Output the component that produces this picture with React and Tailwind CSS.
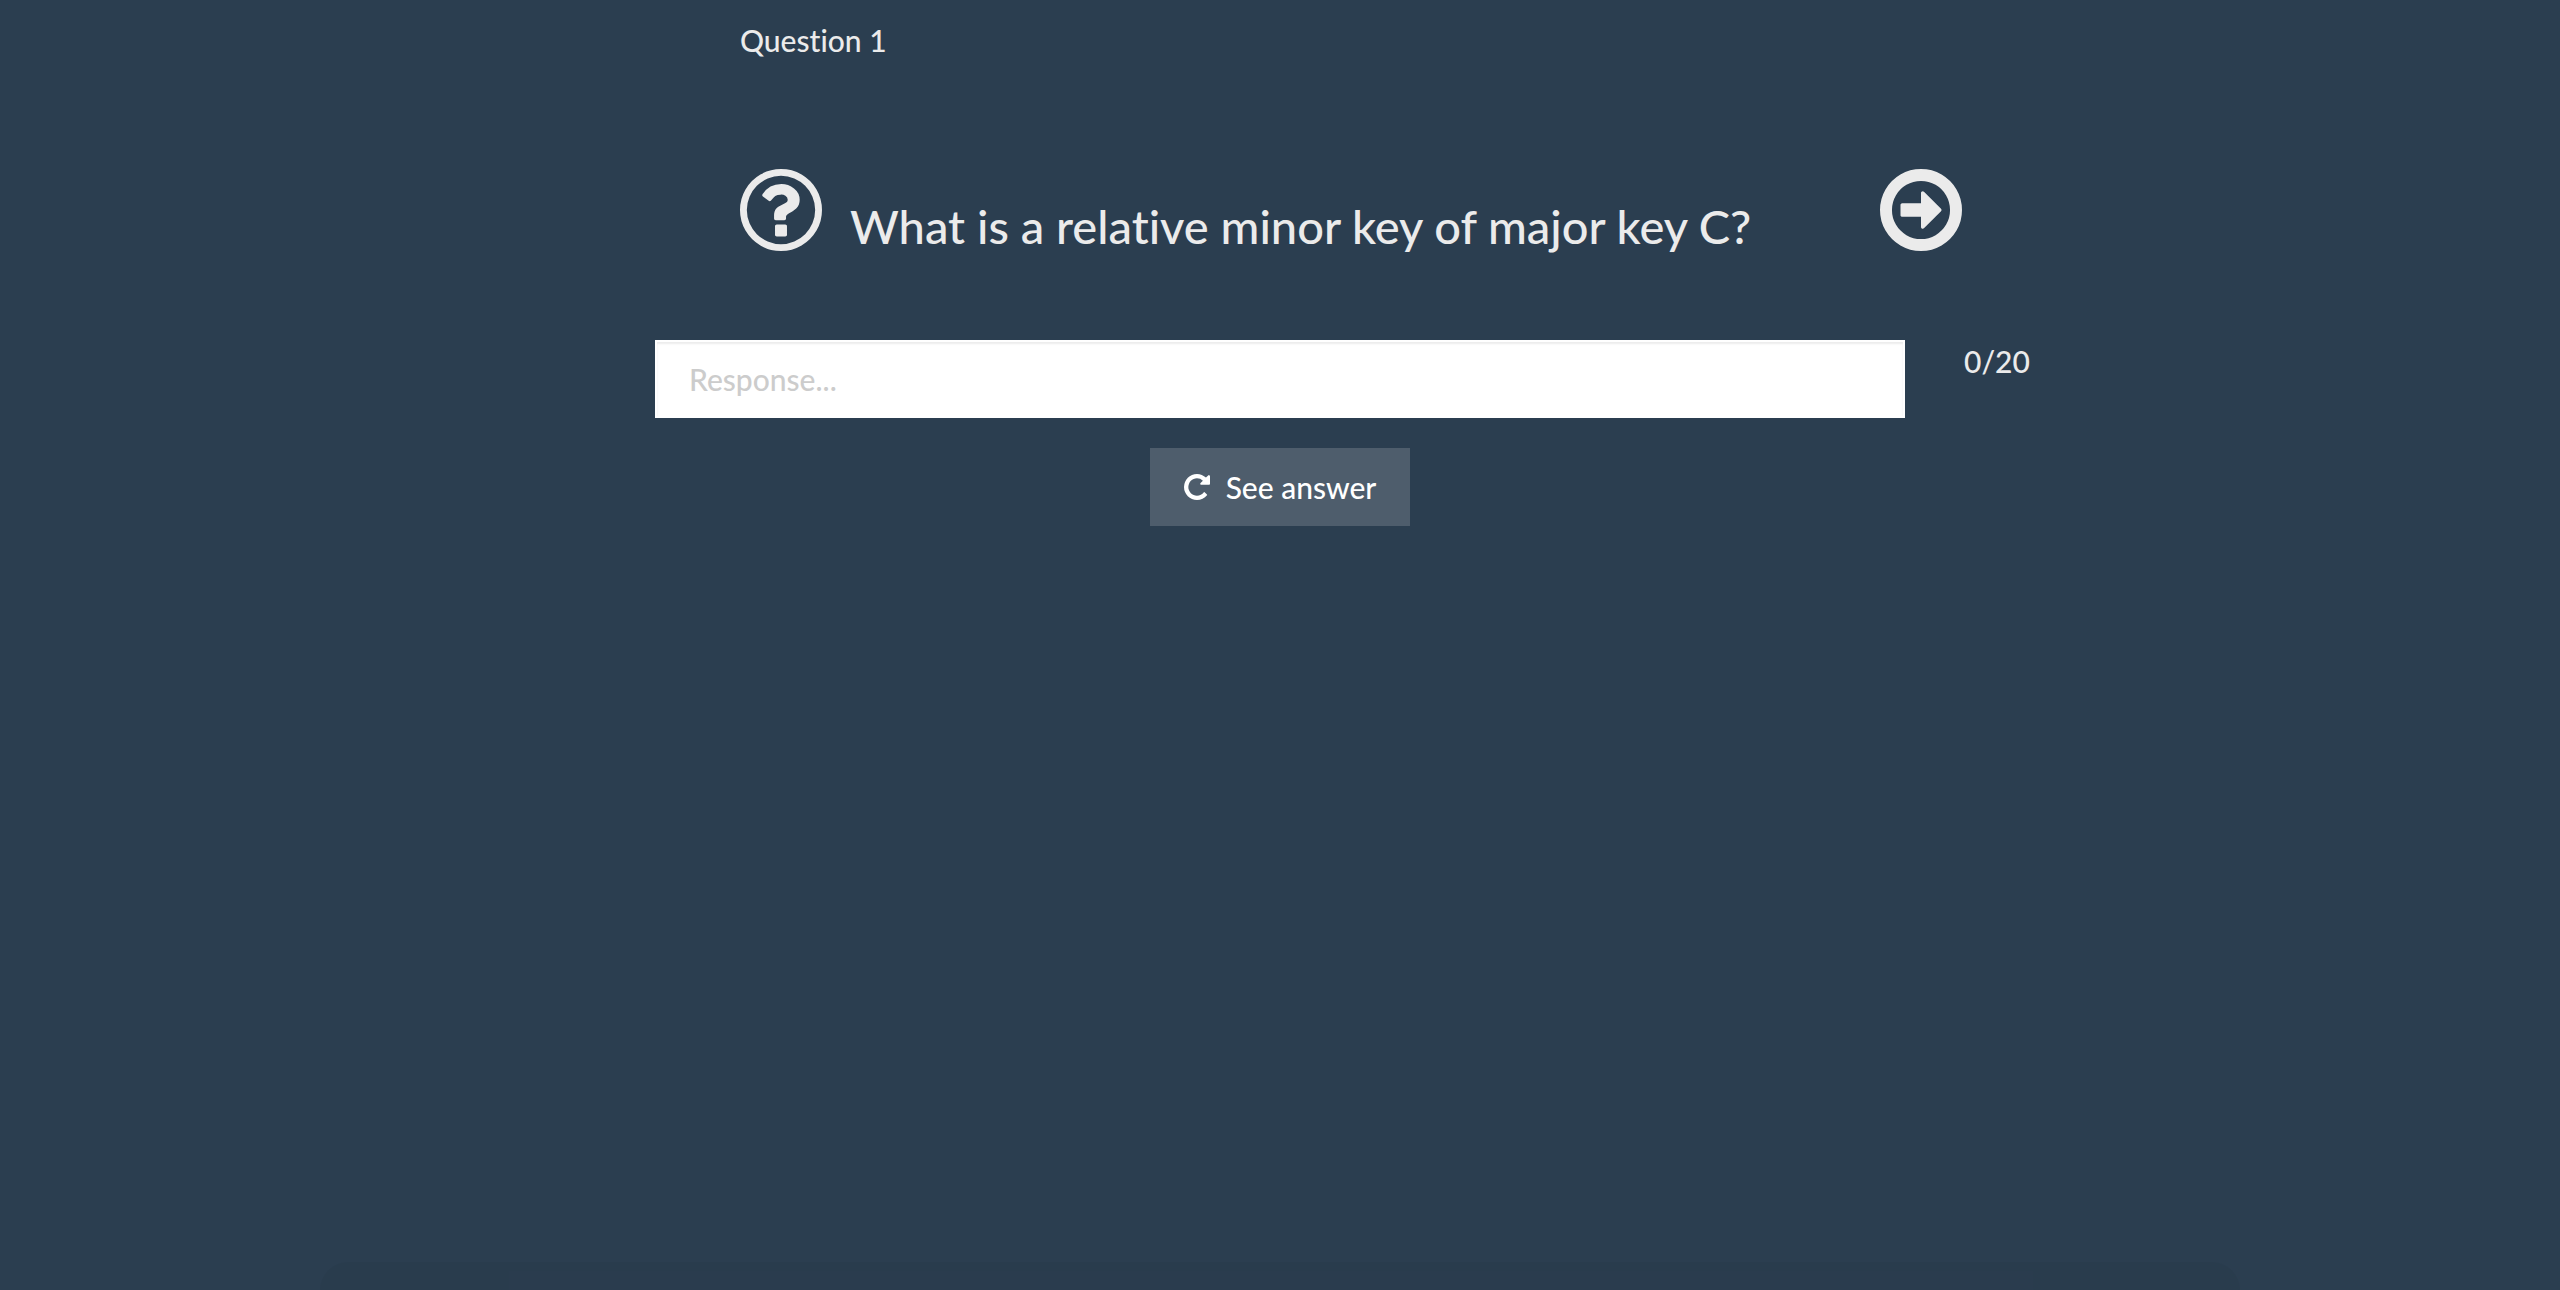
function QuestionIcon() {
  return (
    <svg viewBox="0 0 1536 1536" className="size-[82px] shrink-0" fill="currentColor" aria-hidden="true">
      <path d="M880 1072v160q0 14-9 23t-23 9H688q-14 0-23-9t-9-23v-160q0-14 9-23t23-9h160q14 0 23 9t9 23zm238-496q0 50-15 90t-45.500 69-52 44-59.500 36q-32 18-46.500 28t-26 24-11.500 29v32q0 14-9 23t-23 9H670q-14 0-23-9t-9-23v-68q0-35 10.500-64.500t24-47.500 39-35.500 41-25.500 44.500-21q53-25 75-43t22-49q0-42-43.500-71.500T756 480q-56 0-95 27-29 20-80 83-9 12-25 12-11 0-19-6L429 514q-10-7-12-19t5-23q122-192 354-192 129 0 235.500 83.500T1118 576zM768 128q-130 0-248.500 51t-204 136.500-136.500 204T128 768t51 248.500 136.500 204 204 136.500 248.500 51 248.500-51 204-136.500 136.500-204 51-248.500-51-248.500-136.500-204-204-136.500T768 128zm768 640q0 209-103 385.500T1153.500 1433 768 1536t-385.500-103T103 1153.500 0 768t103-385.500T382.500 103 768 0t385.500 103T1433 382.500 1536 768z" />
    </svg>
  );
}

function NextIcon() {
  return (
    <svg viewBox="0 0 1536 1536" className="size-[82px]" fill="currentColor" aria-hidden="true">
      <path d="M1152 768q0 14-9 23l-320 320q-9 9-23 9-13 0-22.500-9.500T768 1088V896H416q-13 0-22.500-9.500T384 864V672q0-13 9.500-22.500T416 640h352V448q0-14 9-23t23-9q12 0 24 10l319 319q9 9 9 23zm160 0q0-148-73-273t-198-198-273-73-273 73-198 198-73 273 73 273 198 198 273 73 273-73 198-198 73-273zm224 0q0 209-103 385.500T1153.500 1433 768 1536t-385.500-103T103 1153.500 0 768t103-385.500T382.500 103 768 0t385.500 103T1433 382.500 1536 768z" />
    </svg>
  );
}

function RepeatIcon() {
  return (
    <svg viewBox="0 0 1536 1536" className="size-[26px]" fill="currentColor" aria-hidden="true">
      <path d="M1536 128v448q0 26-19 45t-45 19h-448q-42 0-59-40-17-39 14-69l138-138Q969 256 768 256q-104 0-198.500 40.500T406 406 296.500 569.500 256 768t40.500 198.500T406 1130t163.500 109.500T768 1280q119 0 225-52t179-147q7-10 23-12 15 0 25 9l137 138q9 8 9.500 20.500t-7.500 22.500q-109 132-264 204.500T768 1536q-156 0-298-61t-245-164-164-245T0 768t61-298 164-245T470 61 768 0q147 0 284.500 55.500T1297 212l130-129q29-31 70-14 39 17 39 59z" />
    </svg>
  );
}

export default function App() {
  return (
    <main className="relative min-h-screen overflow-hidden bg-[#2b3e50] font-['Lato',sans-serif] text-[30px] leading-[42px] font-medium text-[#ebebeb] [font-variant-ligatures:none]">
      <div className="mx-auto w-full max-w-[1250px]">
        <p className="pt-[19px] pl-[85px]">Question 1</p>
        <header className="mt-[108px] flex pl-[85px]">
          <QuestionIcon />
          <h1 className="ml-7 pt-7 text-[47px] leading-[58px] font-medium">What is a relative minor key of major key C?</h1>
          <button type="button" aria-label="Next question" className="mr-[-57px] ml-auto shrink-0 self-start">
            <NextIcon />
          </button>
        </header>
        <div className="mt-[85px] flex">
          <input aria-label="Response" placeholder="Response..." className="h-[78px] w-full shrink-0 border-2 border-white bg-white px-8 text-[#2b3e50] shadow-[inset_0_2px_2px_rgba(0,0,0,0.075)] outline-none placeholder:text-[#cccccc] placeholder:opacity-100" />
          <span className="ml-[59px]">0/20</span>
        </div>
        <button type="button" className="mx-auto mt-[30px] flex h-[78px] w-[260px] items-center justify-center gap-4 bg-[#4e5d6c] text-white">
          <RepeatIcon />
          See answer
        </button>
      </div>
      {/* Faint shade along the bottom edge */}
      <div aria-hidden="true" className="pointer-events-none absolute inset-x-[320px] bottom-0 h-7 rounded-t-[40px] bg-black/3" />
    </main>
  );
}
